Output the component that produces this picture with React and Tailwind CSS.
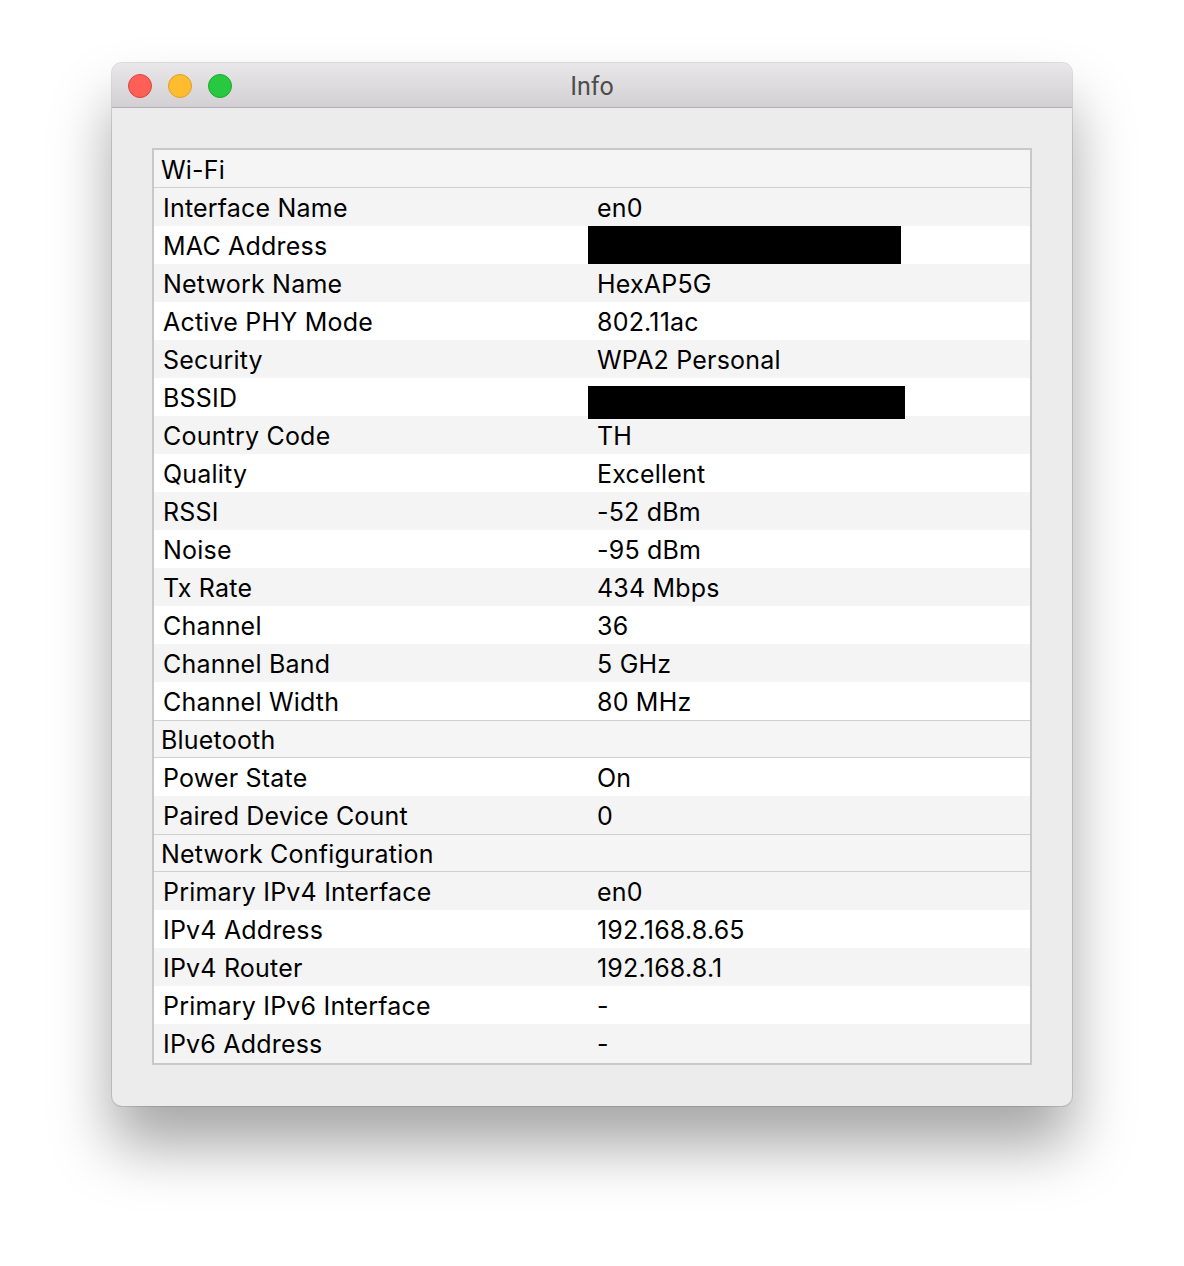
import React from 'react';

// Info window rows; header rows mark sections
const rows = [
  { header: 'Wi-Fi' },
  { label: 'Interface Name', value: 'en0' },
  { label: 'MAC Address', redact: 'mac' },
  { label: 'Network Name', value: 'HexAP5G' },
  { label: 'Active PHY Mode', value: '802.11ac' },
  { label: 'Security', value: 'WPA2 Personal' },
  { label: 'BSSID', redact: 'bssid' },
  { label: 'Country Code', value: 'TH' },
  { label: 'Quality', value: 'Excellent' },
  { label: 'RSSI', value: '-52 dBm' },
  { label: 'Noise', value: '-95 dBm' },
  { label: 'Tx Rate', value: '434 Mbps' },
  { label: 'Channel', value: '36' },
  { label: 'Channel Band', value: '5 GHz' },
  { label: 'Channel Width', value: '80 MHz' },
  { header: 'Bluetooth' },
  { label: 'Power State', value: 'On' },
  { label: 'Paired Device Count', value: '0' },
  { header: 'Network Configuration' },
  { label: 'Primary IPv4 Interface', value: 'en0' },
  { label: 'IPv4 Address', value: '192.168.8.65' },
  { label: 'IPv4 Router', value: '192.168.8.1' },
  { label: 'Primary IPv6 Interface', value: '-' },
  { label: 'IPv6 Address', value: '-' },
];

const Row = ({ row, idx }) => {
  if (row.header) {
    return (
      <div className={`flex items-center pl-[7px] pt-[3px] bg-[#f5f5f5] border-b border-[#d0d0d0] ${idx > 0 ? 'h-[38px] border-t' : 'h-[38px]'}`}>
        {row.header}
      </div>
    );
  }
  const bg = idx % 2 === 1 ? 'bg-[#f4f4f4]' : 'bg-white';
  return (
    <div className={`h-[38px] flex items-center ${bg}`}>
      <div className="w-[434px] pl-[9px] pt-[3px]">{row.label}</div>
      {row.redact === 'mac' && <div className="w-[313px] h-[38px] bg-black"></div>}
      {row.redact === 'bssid' && <div className="w-[317px] h-[33px] mt-[10px] bg-black"></div>}
      {row.value && <div className="pl-[9px] pt-[3px]">{row.value}</div>}
    </div>
  );
};

export default function App() {
  return (
    <div className="w-[1184px] h-[1266px] bg-white pt-[63px] pl-[112px]" style={{ fontFamily: 'Inter, "Noto Sans", sans-serif' }}>
      <div className="w-[960px] rounded-[10px] bg-[#ececec] shadow-[0_40px_60px_rgba(0,0,0,0.35),0_0_0_1px_rgba(0,0,0,0.12)] overflow-hidden">
        {/* title bar */}
        <div className="h-[45px] relative flex items-center justify-center bg-gradient-to-b from-[#e9e7e9] to-[#d2d0d2] border-b border-[#b3b1b3]">
          <div className="absolute left-[16px] top-[11px] flex gap-[16px]">
            <div className="w-[24px] h-[24px] rounded-full bg-[#fe5f57] border border-[#e0443e]"></div>
            <div className="w-[24px] h-[24px] rounded-full bg-[#febc2e] border border-[#dea123]"></div>
            <div className="w-[24px] h-[24px] rounded-full bg-[#28c840] border border-[#1aab29]"></div>
          </div>
          <span className="text-[25px] text-[#4d4d4d] pt-[3px]" style={{ fontFamily: 'Roboto, sans-serif' }}>Info</span>
        </div>
        {/* content */}
        <div className="pt-[40px] pb-[41px] pl-[40px]">
          <div className="w-[880px] border-2 border-[#c8c8c8] bg-white text-[25px] tracking-[0.2px] text-black leading-none">
            {rows.map((row, idx) => (
              <Row key={idx} row={row} idx={idx} />
            ))}
            <div className="h-px bg-[#f4f4f4]"></div>
          </div>
        </div>
      </div>
    </div>
  );
}
